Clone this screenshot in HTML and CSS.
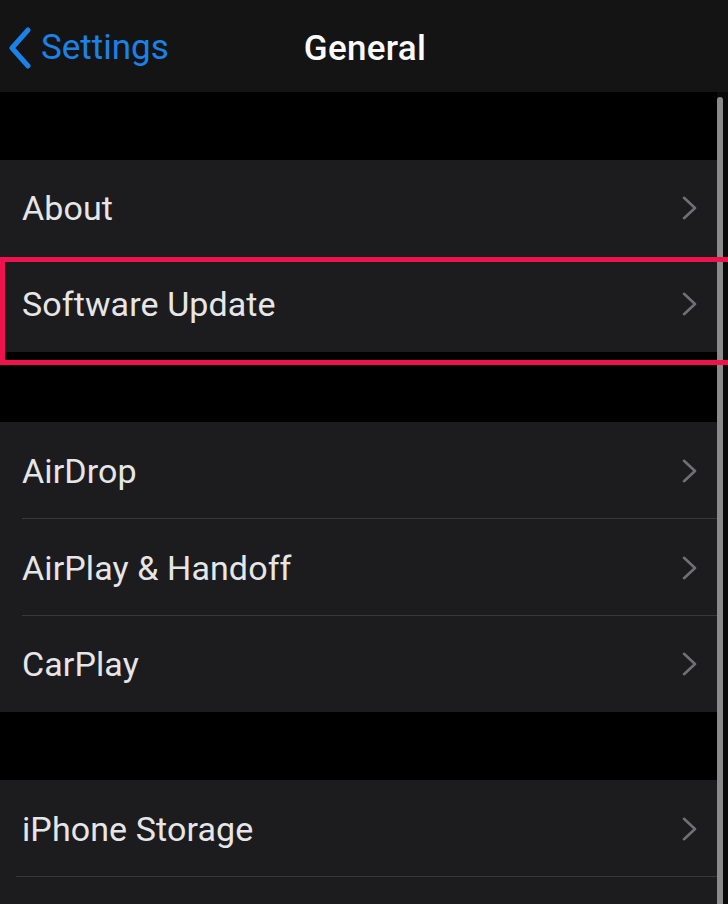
FILE: index.html
```html
<!DOCTYPE html>
<html>
<head>
<meta charset="utf-8">
<link rel="stylesheet" href="styles.css">
</head>
<body>
<div class="screen">
  <header class="nav">
    <div class="back">
      <svg class="back-icon" width="26" height="42" viewBox="0 0 26 42"><path d="M21 3 L5 21 L21 39" fill="none" stroke="#1a82e8" stroke-width="5" stroke-linecap="round" stroke-linejoin="round"/></svg>
      <span class="back-label">Settings</span>
    </div>
    <div class="title">General</div>
  </header>
  <main class="list">
    <div class="spacer first"></div>
    <section class="group">
      <div class="row"><span class="label">About</span><svg class="chev" width="16" height="24" viewBox="0 0 16 24"><path d="M2 1.8 L13 12 L2 22.2" fill="none" stroke="#707074" stroke-width="2.6" stroke-linecap="round" stroke-linejoin="round"/></svg></div>
      <div class="row highlighted"><span class="label">Software Update</span><svg class="chev" width="16" height="24" viewBox="0 0 16 24"><path d="M2 1.8 L13 12 L2 22.2" fill="none" stroke="#707074" stroke-width="2.6" stroke-linecap="round" stroke-linejoin="round"/></svg></div>
    </section>
    <div class="spacer second"></div>
    <section class="group">
      <div class="row tall sep"><span class="label">AirDrop</span><svg class="chev" width="16" height="24" viewBox="0 0 16 24"><path d="M2 1.8 L13 12 L2 22.2" fill="none" stroke="#707074" stroke-width="2.6" stroke-linecap="round" stroke-linejoin="round"/></svg></div>
      <div class="row tall sep"><span class="label">AirPlay &amp; Handoff</span><svg class="chev" width="16" height="24" viewBox="0 0 16 24"><path d="M2 1.8 L13 12 L2 22.2" fill="none" stroke="#707074" stroke-width="2.6" stroke-linecap="round" stroke-linejoin="round"/></svg></div>
      <div class="row"><span class="label">CarPlay</span><svg class="chev" width="16" height="24" viewBox="0 0 16 24"><path d="M2 1.8 L13 12 L2 22.2" fill="none" stroke="#707074" stroke-width="2.6" stroke-linecap="round" stroke-linejoin="round"/></svg></div>
    </section>
    <div class="spacer"></div>
    <section class="group">
      <div class="row tall sep sep-narrow"><span class="label">iPhone Storage</span><svg class="chev" width="16" height="24" viewBox="0 0 16 24"><path d="M2 1.8 L13 12 L2 22.2" fill="none" stroke="#707074" stroke-width="2.6" stroke-linecap="round" stroke-linejoin="round"/></svg></div>
      <div class="row"></div>
    </section>
  </main>
  <div class="scroll-track"><div class="scroll-thumb"></div></div>
</div>
</body>
</html>
```

FILE: styles.css
```css
* { box-sizing: border-box; }
html, body { margin: 0; padding: 0; background: #000; }
body {
  font-family: Roboto, "Noto Sans", sans-serif;
  color: #e6e6e8;
  width: 728px;
  height: 904px;
  overflow: hidden;
}
.screen { position: relative; width: 728px; height: 904px; overflow: hidden; }
.nav {
  position: relative;
  height: 92px;
  background: #141414;
  display: flex;
  align-items: center;
  justify-content: center;
}
.back {
  position: absolute;
  left: 7px;
  top: 27px;
  display: flex;
  align-items: center;
  gap: 8px;
}
.back-label {
  font-size: 35px;
  color: #1a82e8;
  letter-spacing: 0;
  line-height: 42px;
}
.title {
  font-size: 35px;
  font-weight: 500;
  color: #fafafa;
  letter-spacing: 0.3px;
  padding-top: 4px;
  padding-left: 2px;
}
.spacer { height: 68px; background: #000; }
.spacer.second { height: 70px; }
.group { background: #1c1c1e; }
.row {
  position: relative;
  height: 96px;
  display: flex;
  align-items: center;
  justify-content: space-between;
  padding: 0 30px 0 22px;
}
.row.tall { height: 97px; }
.label { font-size: 34px; letter-spacing: 0.1px; }
.chev { flex: none; }
.sep::after {
  content: "";
  position: absolute;
  left: 22px;
  right: 0;
  bottom: 0;
  height: 1px;
  background: #38383a;
}
.sep-narrow::after { left: 16px; }
.highlighted::before {
  content: "";
  position: absolute;
  left: 0;
  top: 1px;
  width: 724px;
  height: 98px;
  border: 5px solid #f0124d;
  z-index: 3;
}
.scroll-track {
  position: absolute;
  top: 92px;
  left: 717px;
  width: 11px;
  bottom: 0;
  background: #0a0a0a;
  z-index: 2;
}
.scroll-thumb {
  margin-top: 5px;
  width: 6px;
  height: 820px;
  background: #8a8a8c;
  border-radius: 3px 3px 0 0;
}
```
